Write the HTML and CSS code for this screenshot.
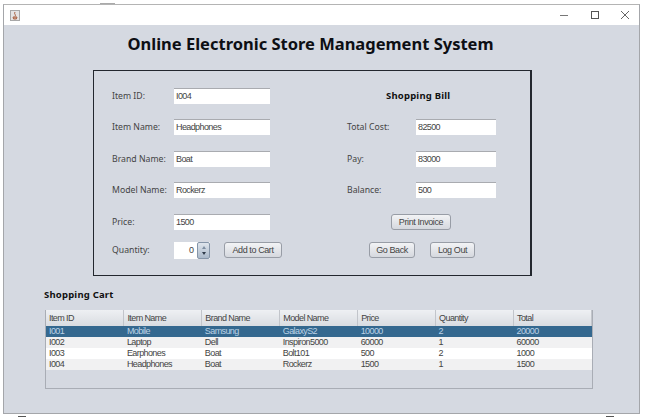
FILE: index.html
```html
<!DOCTYPE html>
<html lang="en">
<head>
    <meta charset="UTF-8">
    <title>Online Electronic Store Management System</title>
    <link rel="stylesheet" href="styles.css">
</head>
<body>
    <div class="window">
        <div class="titlebar">
            <svg class="java-icon" width="10" height="11" viewBox="0 0 10 11">
                <rect x="0.5" y="0.5" width="9" height="10" fill="#e4e4e4" stroke="#a8a8a8"/>
                <path d="M5 2 C3.5 4 6.5 4.5 5 6.5 M3 7 H7 L6.4 9 H3.6 Z" fill="#d8a58a" stroke="#a8664a" stroke-width="1"/>
            </svg>
            <div class="controls">
                <svg width="10" height="10" viewBox="0 0 10 10"><path d="M0 5.5 H8" stroke="#777"/></svg>
                <svg width="10" height="10" viewBox="0 0 10 10"><rect x="1.5" y="1.5" width="7" height="7" fill="none" stroke="#555"/></svg>
                <svg width="10" height="10" viewBox="0 0 10 10"><path d="M1 1 L9 9 M9 1 L1 9" stroke="#666"/></svg>
            </div>
        </div>

        <div class="content">
            <h1>Online Electronic Store Management System</h1>

            <div class="panel">
                <!-- item details -->
                <div class="col col-left">
                    <div class="row"><label>Item ID:</label><div class="field">I004</div></div>
                    <div class="row"><label>Item Name:</label><div class="field">Headphones</div></div>
                    <div class="row"><label>Brand Name:</label><div class="field">Boat</div></div>
                    <div class="row"><label>Model Name:</label><div class="field">Rockerz</div></div>
                    <div class="row"><label>Price:</label><div class="field">1500</div></div>
                    <div class="row row-last">
                        <label>Quantity:</label>
                        <div class="spinner">
                            <div class="spinner-value">0</div>
                            <div class="spinner-arrows">
                                <span class="arrow-up"></span>
                                <span class="arrow-down"></span>
                            </div>
                        </div>
                        <div class="btn btn-cart">Add to Cart</div>
                    </div>
                </div>

                <!-- bill -->
                <div class="col col-right">
                    <div class="row row-heading"><h3>Shopping Bill</h3></div>
                    <div class="row"><label>Total Cost:</label><div class="field field-bill">82500</div></div>
                    <div class="row"><label>Pay:</label><div class="field field-bill">83000</div></div>
                    <div class="row"><label>Balance:</label><div class="field field-bill">500</div></div>
                    <div class="row row-print"><div class="btn btn-print">Print Invoice</div></div>
                    <div class="row row-last row-actions">
                        <div class="btn btn-back">Go Back</div>
                        <div class="btn btn-logout">Log Out</div>
                    </div>
                </div>
            </div>

            <h2>Shopping Cart</h2>

            <div class="table-box">
                <table>
                    <thead>
                        <tr><th>Item ID</th><th>Item Name</th><th>Brand Name</th><th>Model Name</th><th>Price</th><th>Quantity</th><th>Total</th></tr>
                    </thead>
                    <tbody>
                        <tr class="selected"><td>I001</td><td>Mobile</td><td>Samsung</td><td>GalaxyS2</td><td>10000</td><td>2</td><td>20000</td></tr>
                        <tr class="alt"><td>I002</td><td>Laptop</td><td>Dell</td><td>Inspiron5000</td><td>60000</td><td>1</td><td>60000</td></tr>
                        <tr><td>I003</td><td>Earphones</td><td>Boat</td><td>Bolt101</td><td>500</td><td>2</td><td>1000</td></tr>
                        <tr class="alt"><td>I004</td><td>Headphones</td><td>Boat</td><td>Rockerz</td><td>1500</td><td>1</td><td>1500</td></tr>
                    </tbody>
                </table>
            </div>
        </div>
    </div>

    <!-- bits of what was behind the window -->
    <span class="behind behind-top"></span>
    <span class="behind behind-left"></span>
    <span class="behind behind-right"></span>
</body>
</html>
```

FILE: styles.css
```css
* {
    box-sizing: border-box;
}

body {
    position: relative;
    margin: 0;
    height: 419px;
    overflow: hidden;
    background-color: #fff;
    font-family: "Noto Sans", sans-serif;
    font-size: 8.7px;
    color: #444;
}

.window {
    margin: 4px 6px 0 3px;
    height: 410px;
    border: 1px solid #a4a6aa;
    border-top-color: #b4b4b4;
    background-color: #d5d9e1;
}

.titlebar {
    display: flex;
    justify-content: space-between;
    align-items: center;
    height: 20px;
    padding: 0 9px 0 6px;
    background-color: #fff;
}

.java-icon {
    display: block;
}

.controls {
    display: flex;
    gap: 20px;
}

.controls svg {
    display: block;
}

.content {
    padding-top: 8px;
}

h1 {
    margin: 0 0 16px 0;
    height: 21px;
    padding-right: 22px;
    font-size: 16.5px;
    line-height: 21px;
    font-weight: bold;
    text-align: center;
    color: #0d0f14;
}

.panel {
    display: flex;
    width: 439px;
    height: 206px;
    margin-left: 89px;
    padding-top: 9px;
    border: 1px solid #23272e;
    border-width: 1px 2px 1px 1px;
}

.col {
    display: flex;
    flex-direction: column;
}

.col-left {
    width: 253px;
    padding-left: 18px;
}

.col-right {
    width: 180px;
}

.row {
    display: flex;
    align-items: center;
    height: 31.5px;
    flex-shrink: 0;
}

.row label {
    width: 62px;
    flex-shrink: 0;
}

.col-right .row label {
    width: 69px;
}

.row-heading {
    padding-left: 39px;
}

.row-print {
    padding-left: 44px;
}

.row-last {
    height: 25px;
}

.row-actions {
    padding-left: 22px;
    gap: 15px;
}

.field {
    width: 96px;
    height: 16px;
    padding-left: 2px;
    line-height: 15px;
    background-color: #fff;
    border-top: 1px solid #a9abb0;
    font-family: "Liberation Sans", sans-serif;
    font-size: 9px;
    letter-spacing: -0.6px;
}

.field-bill {
    width: 80px;
}

h3 {
    margin: 0;
    font-size: 9.5px;
    letter-spacing: 0.2px;
    color: #111;
}

.spinner {
    display: flex;
    width: 36px;
    height: 17px;
    background-color: #fff;
    font-family: "Liberation Sans", sans-serif;
    font-size: 9px;
}

.spinner-value {
    width: 23px;
    padding-right: 3px;
    text-align: right;
    line-height: 17px;
}

.spinner-arrows {
    display: flex;
    flex-direction: column;
    align-items: center;
    justify-content: center;
    gap: 3px;
    width: 13px;
    background: linear-gradient(#dfe5ec, #aab9ca);
    border: 1px solid #8595a8;
    border-radius: 2px;
}

.arrow-up {
    border: 2.5px solid transparent;
    border-top: 0;
    border-bottom: 3px solid #7d8da1;
}

.arrow-down {
    border: 2.5px solid transparent;
    border-bottom: 0;
    border-top: 3px solid #2f3b4a;
}

.btn {
    height: 16px;
    line-height: 14px;
    text-align: center;
    background: linear-gradient(#f2f3f5, #d5d8de);
    border: 1px solid #989da6;
    border-radius: 3px;
    font-family: "Liberation Sans", sans-serif;
    font-size: 9px;
    letter-spacing: -0.4px;
}

.btn-cart {
    width: 58px;
    margin-left: 14px;
}

.btn-print {
    width: 60px;
}

.btn-back {
    width: 46px;
}

.btn-logout {
    width: 45px;
}

h2 {
    margin: 13px 0 0 40px;
    height: 12px;
    font-size: 9.5px;
    letter-spacing: 0.2px;
    line-height: 12px;
    color: #111;
}

.table-box {
    width: 548px;
    height: 79px;
    margin: 9px 0 0 41px;
    background-color: #d5d9e1;
    border: 1px solid #a9adb5;
    border-top: 0;
}

table {
    width: 100%;
    table-layout: fixed;
    border-collapse: collapse;
    font-family: "Liberation Sans", sans-serif;
    font-size: 9px;
    letter-spacing: -0.6px;
    color: #444;
}

th {
    height: 16px;
    padding: 0 0 0 3px;
    font-weight: normal;
    text-align: left;
    background: linear-gradient(#eef0f3, #d9dce1);
    border-right: 1px solid #c2c5cb;
}

td {
    height: 11px;
    padding: 0 0 0 3px;
    line-height: 11px;
    background-color: #fff;
}

.alt td {
    background-color: #f1f1f2;
}

.selected td {
    background-color: #34688f;
    color: #bcd3e6;
}

.behind {
    position: absolute;
    height: 1px;
    background-color: #555;
}

.behind-top {
    top: 3px;
    left: 100px;
    width: 15px;
    background-color: #aaa;
}

.behind-left {
    top: 416px;
    left: 18px;
    width: 8px;
}

.behind-right {
    top: 416px;
    left: 606px;
    width: 8px;
}
```
